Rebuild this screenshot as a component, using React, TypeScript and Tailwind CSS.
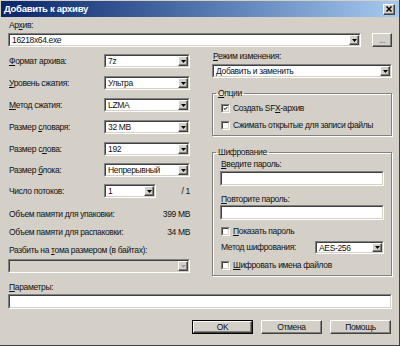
import React from "react";

const raised =
  "bg-[#d4d0c8] border border-t-white border-l-white border-r-[#404040] border-b-[#404040] shadow-[inset_-1px_-1px_0_#808080]";

const Sunken = ({
  className = "",
  bg = "bg-white",
  children,
}: {
  className?: string;
  bg?: string;
  children?: React.ReactNode;
}) => (
  <div className={`border border-t-[#808080] border-l-[#808080] border-r-white border-b-white ${className}`}>
    <div className={`h-full flex items-center border border-t-[#404040] border-l-[#404040] border-r-[#d4d0c8] border-b-[#d4d0c8] ${bg}`}>
      {children}
    </div>
  </div>
);

const DropBtn = ({ disabled }: { disabled?: boolean }) => (
  <div className={`h-full w-[10px] flex items-center justify-center ${raised}`}>
    <svg width="5" height="3" viewBox="0 0 5 3">
      <polygon points="0,0 5,0 2.5,3" fill={disabled ? "#a0a0a0" : "#000"} />
    </svg>
  </div>
);

const Combo = ({
  value = "",
  className = "",
  disabled,
  h = "h-[14px]",
}: {
  value?: string;
  className?: string;
  disabled?: boolean;
  h?: string;
}) => (
  <Sunken className={`${h} ${className}`} bg={disabled ? "bg-[#d4d0c8]" : "bg-white"}>
    <span className="flex-1 pl-[2px] leading-[10px] whitespace-nowrap overflow-hidden">{value}</span>
    <DropBtn disabled={disabled} />
  </Sunken>
);

const Check = ({ checked, children }: { checked?: boolean; children: React.ReactNode }) => (
  <div className="flex items-center h-[11px] leading-[11px]">
    <Sunken className="w-[9px] h-[9px] mr-[3px]">
      {checked && (
        <svg width="7" height="7" viewBox="0 0 7 7">
          <path d="M1 3 L3 5 L6 1.5" stroke="#000" strokeWidth="1.4" fill="none" />
        </svg>
      )}
    </Sunken>
    <span>{children}</span>
  </div>
);

const Btn = ({ children, def }: { children: React.ReactNode; def?: boolean }) =>
  def ? (
    <div className="w-[61px] h-[14px] border border-black">
      <div className={`h-full flex items-center justify-center leading-[10px] ${raised}`}>{children}</div>
    </div>
  ) : (
    <div className={`w-[61px] h-[14px] flex items-center justify-center leading-[10px] ${raised}`}>{children}</div>
  );

const Row = ({ label, children, className = "" }: { label: React.ReactNode; children: React.ReactNode; className?: string }) => (
  <div className={`flex items-center h-[14px] ${className}`}>
    <span className="w-[96px] pl-[1px] whitespace-nowrap">{label}</span>
    {children}
  </div>
);

const Group = ({
  title,
  className = "",
  legend = "",
  children,
}: {
  title: React.ReactNode;
  className?: string;
  legend?: string;
  children: React.ReactNode;
}) => (
  <fieldset className={`border border-[#808080] shadow-[1px_1px_0_#fff,inset_1px_1px_0_#fff] ${className}`}>
    <legend className={`px-[2px] leading-[11px] ${legend}`}>{title}</legend>
    {children}
  </fieldset>
);

export default function App() {
  return (
    <div className="w-[400px] h-[346px] bg-[#d4d0c8] border-r border-b border-r-[#404040] border-b-[#404040] font-['Liberation_Sans',Arial,sans-serif] text-[8.5px] tracking-[-0.35px] text-[#111] overflow-hidden">
      {/* title bar */}
      <div className="mt-[1px] ml-[1px] h-[16px] flex items-center bg-gradient-to-r from-[#0a246a] to-[#a6caf0] pl-[3px] pr-[4px]">
        <span className="flex-1 text-white font-bold text-[9.5px] tracking-[-0.3px]">Добавить к архиву</span>
        <div className={`w-[12px] h-[11px] flex items-center justify-center ${raised}`}>
          <svg width="6" height="6" viewBox="0 0 6 6">
            <path d="M0.5 0.5 L5.5 5.5 M5.5 0.5 L0.5 5.5" stroke="#000" strokeWidth="1.5" />
          </svg>
        </div>
      </div>

      <div className="pl-[8px] pr-[7px] pt-[3px]">
        <div className="h-[11px] leading-[11px] pl-[1px]">
          Ар<u>х</u>ив:
        </div>
        <div className="mt-[2px] flex items-center">
          <Combo value="16218x64.exe" className="w-[353px]" />
          <div className={`ml-auto w-[20px] h-[14px] flex items-center justify-center leading-[10px] text-[#606060] ${raised}`}>
            ...
          </div>
        </div>

        <div className="mt-[4px] flex items-start">
          {/* left column */}
          <div className="w-[182px] pt-[3px] flex flex-col">
            <Row label={<><u>Ф</u>ормат архива:</>}>
              <Combo value="7z" className="w-[86px]" />
            </Row>
            <Row label={<><u>У</u>ровень сжатия:</>} className="mt-[8px]">
              <Combo value="Ультра" className="w-[86px]" />
            </Row>
            <Row label={<><u>М</u>етод сжатия:</>} className="mt-[8px]">
              <Combo value="LZMA" className="w-[86px]" />
            </Row>
            <Row label={<>Размер <u>с</u>ловаря:</>} className="mt-[8px]">
              <Combo value="32 MB" className="w-[86px]" />
            </Row>
            <Row label={<>Размер с<u>л</u>ова:</>} className="mt-[8px]">
              <Combo value="192" className="w-[86px]" />
            </Row>
            <Row label={<>Размер <u>б</u>лока:</>} className="mt-[7px]">
              <Combo value="Непрерывный" className="w-[86px]" />
            </Row>
            <Row label={<>Число потоков:</>} className="mt-[7px]">
              <Combo value="1" className="w-[52px]" />
              <span className="ml-auto">/ 1</span>
            </Row>
            <div className="mt-[11px] h-[11px] leading-[11px] flex pl-[1px]">
              <span>Объем памяти для упаковки:</span>
              <span className="ml-auto">399 MB</span>
            </div>
            <div className="mt-[7px] h-[11px] leading-[11px] flex pl-[1px]">
              <span>Объем памяти для распаковки:</span>
              <span className="ml-auto">34 MB</span>
            </div>
            <div className="mt-[7px] h-[11px] leading-[11px] pl-[1px]">
              Разбить на <u>т</u>ома размером (в байтах):
            </div>
            <Combo disabled className="mt-[3px] w-[182px]" />
          </div>

          {/* right column */}
          <div className="ml-auto w-[180px] flex flex-col">
            <div className="h-[11px] leading-[11px] pl-[1px]">
              <u>Р</u>ежим изменения:
            </div>
            <Combo value="Добавить и заменить" className="mt-[2px] w-[180px]" />

            <Group title={<><u>О</u>пции</>} legend="-ml-[5px]" className="mt-[10px] px-[8px] pb-[4px]">
              <div className="mt-[4px]">
                <Check checked>
                  Создать SF<u>X</u>-архив
                </Check>
              </div>
              <div className="mt-[6px]">
                <Check>Сжимать открытые для записи файлы</Check>
              </div>
            </Group>

            <Group title="Шифрование" legend="-ml-[4px]" className="mt-[11px] px-[7px] pb-[4px]">
              <div className="mt-[1px] h-[11px] leading-[11px] pl-[1px]">
                <u>В</u>ведите пароль:
              </div>
              <Sunken className="mt-[1px] h-[15px]" />
              <div className="mt-[8px] h-[11px] leading-[11px] pl-[1px]">
                <u>П</u>овторите пароль:
              </div>
              <Sunken className="h-[15px]" />
              <div className="mt-[6px] pl-[1px]">
                <Check>
                  <u>П</u>оказать пароль
                </Check>
              </div>
              <div className="mt-[4px] flex items-center h-[13px] pl-[1px]">
                <span>Метод шифрования:</span>
                <Combo value="AES-256" h="h-[13px]" className="ml-auto w-[69px]" />
              </div>
              <div className="mt-[6px] pl-[1px]">
                <Check>
                  <u>Ш</u>ифровать имена файлов
                </Check>
              </div>
            </Group>
          </div>
        </div>

        <div className="mt-[6px] h-[11px] leading-[11px] pl-[1px]">
          <u>П</u>араметры:
        </div>
        <Sunken className="mt-[1px] h-[15px]" />

        <div className="mt-[11px] flex justify-end gap-[8px] pr-[1px]">
          <Btn def>OK</Btn>
          <Btn>Отмена</Btn>
          <Btn>Помощь</Btn>
        </div>
      </div>
    </div>
  );
}
